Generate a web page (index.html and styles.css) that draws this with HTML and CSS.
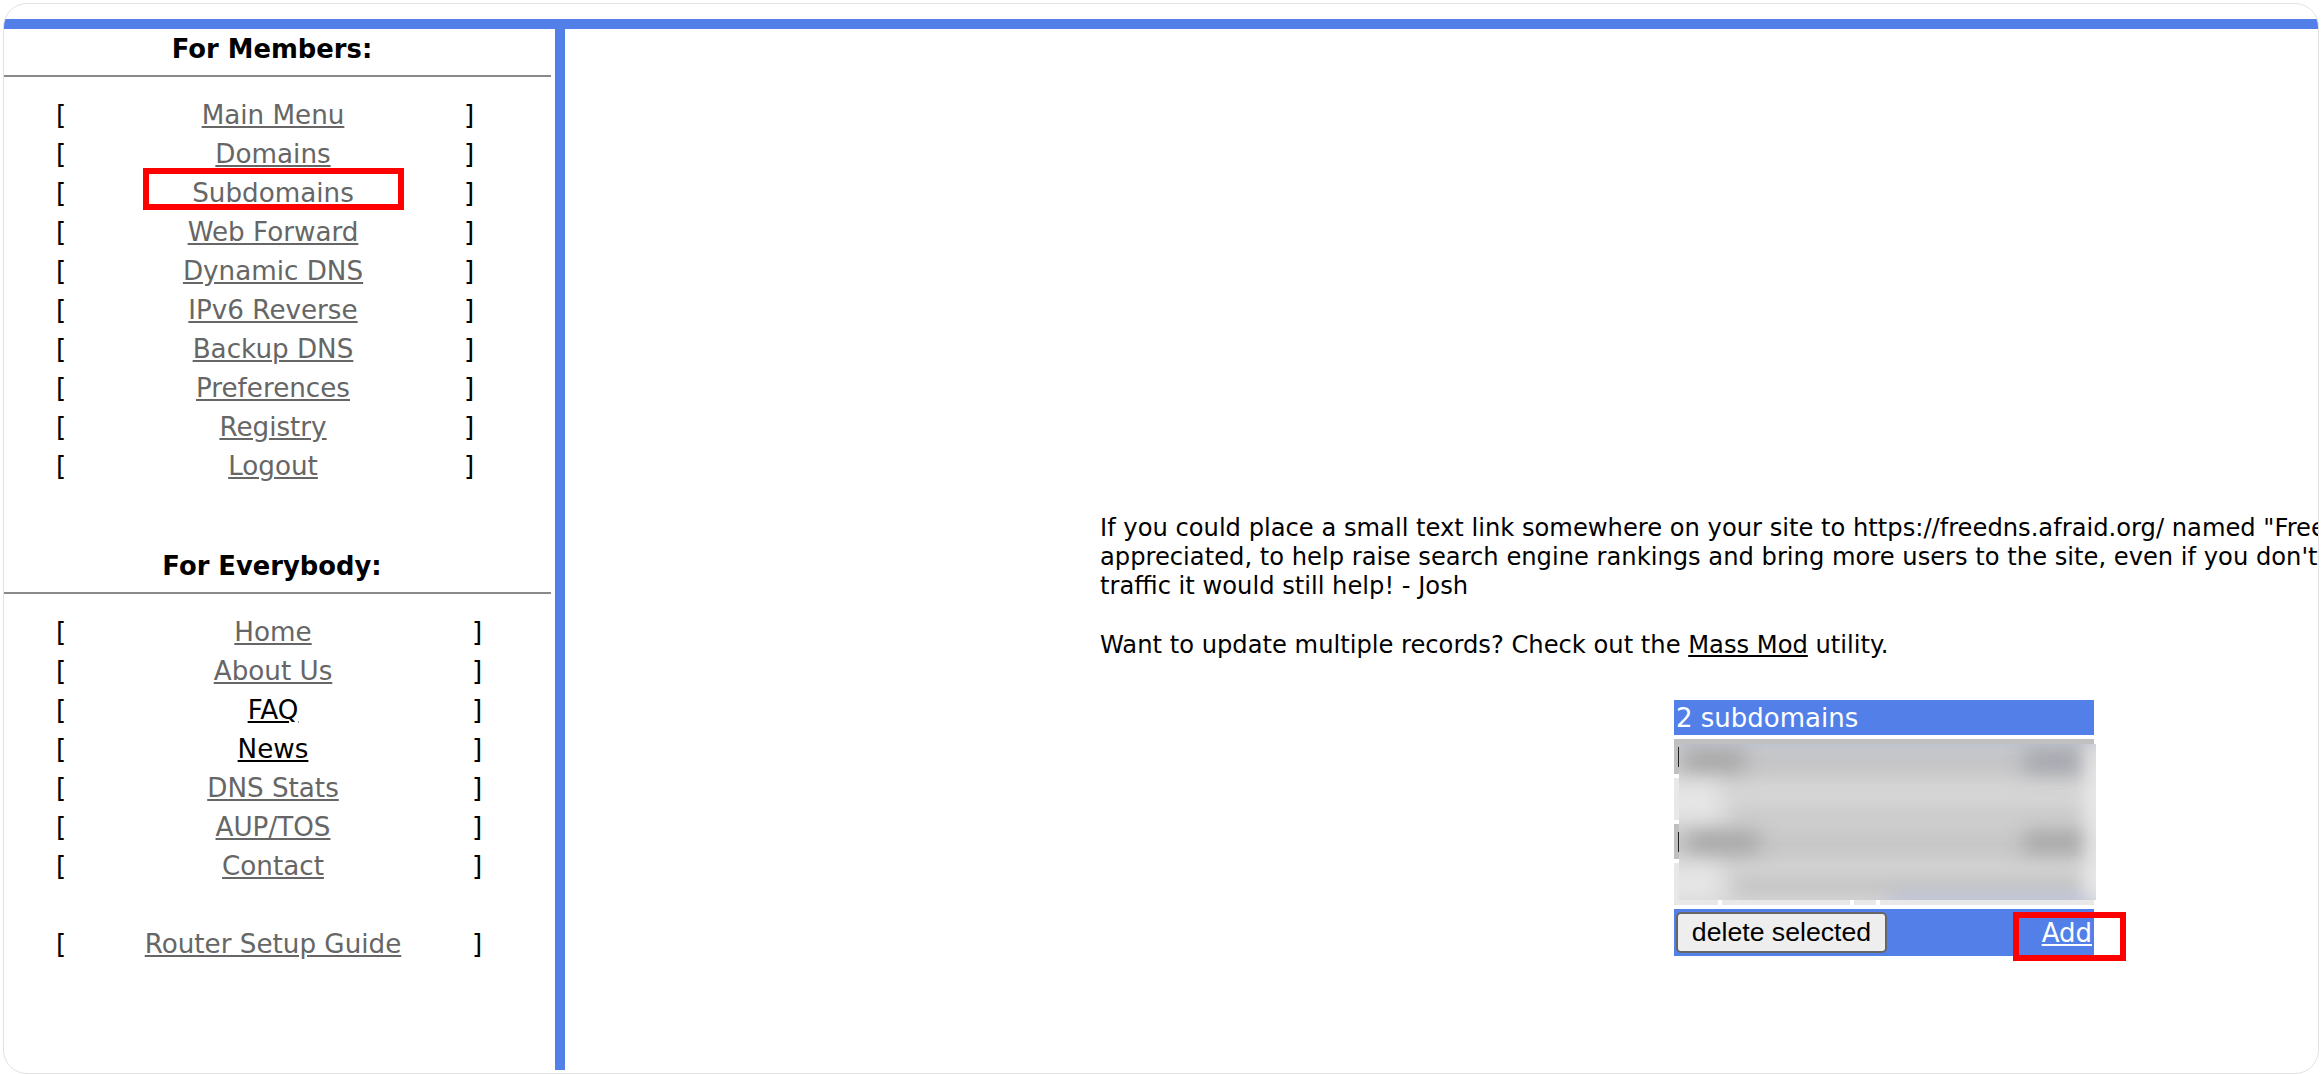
FILE: index.html
```html
<!DOCTYPE html>
<html lang="en">
<head>
    <meta charset="UTF-8">
    <title>Subdomains</title>
    <link rel="stylesheet" href="styles.css">
</head>
<body>
    <div class="frame">
        <div class="top-bar"></div>
        <div class="main">
            <div class="sidebar">
                <h3 class="side-title">For Members:</h3>
                <hr class="side-rule">
                <div class="nav">
                    <span>[</span><a href="#">Main Menu</a><span>]</span>
                    <span>[</span><a href="#">Domains</a><span>]</span>
                    <span>[</span><a href="#" class="marked">Subdomains</a><span>]</span>
                    <span>[</span><a href="#">Web Forward</a><span>]</span>
                    <span>[</span><a href="#">Dynamic DNS</a><span>]</span>
                    <span>[</span><a href="#">IPv6 Reverse</a><span>]</span>
                    <span>[</span><a href="#">Backup DNS</a><span>]</span>
                    <span>[</span><a href="#">Preferences</a><span>]</span>
                    <span>[</span><a href="#">Registry</a><span>]</span>
                    <span>[</span><a href="#">Logout</a><span>]</span>
                </div>
                <h3 class="side-title side-title-second">For Everybody:</h3>
                <hr class="side-rule">
                <div class="nav nav-wide">
                    <span>[</span><a href="#">Home</a><span>]</span>
                    <span>[</span><a href="#">About Us</a><span>]</span>
                    <span>[</span><a href="#" class="dark">FAQ</a><span>]</span>
                    <span>[</span><a href="#" class="dark">News</a><span>]</span>
                    <span>[</span><a href="#">DNS Stats</a><span>]</span>
                    <span>[</span><a href="#">AUP/TOS</a><span>]</span>
                    <span>[</span><a href="#">Contact</a><span>]</span>
                </div>
                <div class="nav nav-wide nav-guide">
                    <span>[</span><a href="#">Router Setup Guide</a><span>]</span>
                </div>
            </div>
            <div class="divider"></div>
            <div class="content">
                <p class="note">If you could place a small text link somewhere on your site to https://freedns.afraid.org/ named "Free DNS" it would be greatly<br>appreciated, to help raise search engine rankings and bring more users to the site, even if you don't get much<br>traffic it would still help! - Josh</p>
                <p class="note note-mass">Want to update multiple records? Check out the <a href="#">Mass Mod</a> utility.</p>
                <div class="records">
                    <div class="records-head">2 subdomains</div>
                    <div class="record record-dark"></div>
                    <div class="record record-light"></div>
                    <div class="record record-dark"></div>
                    <div class="record record-light record-cells"></div>
                    <div class="records-foot">
                        <button type="button">delete selected</button>
                        <a href="#">Add</a>
                    </div>
                    <div class="smudge">
                        <i class="s1"></i><i class="s2"></i><i class="s3"></i><i class="s4"></i>
                        <i class="s5"></i><i class="s6"></i><i class="s7"></i><i class="s8"></i>
                        <i class="s9"></i><i class="s10"></i><i class="s11"></i><i class="s12"></i>
                        <i class="s13"></i>
                    </div>
                    <div class="add-mark"></div>
                </div>
            </div>
        </div>
    </div>
</body>
</html>
```

FILE: styles.css
```css
html, body {
    height: 100%;
}
body {
    margin: 0;
    background: #fff;
    color: #000;
    font-family: "DejaVu Sans", sans-serif;
    font-size: 24.2px;
    line-height: 29px;
}
.frame {
    box-sizing: border-box;
    height: 1071px;
    margin: 3px 3px 0 3px;
    border: 1px solid #e2e2e2;
    border-radius: 24px;
    padding-top: 15px;
    overflow: hidden;
}
.top-bar {
    height: 10px;
    background: #527fe8;
}
.main {
    display: flex;
    height: 1041px;
}
.sidebar {
    width: 551px;
    flex: none;
    padding-top: 6px;
    font-size: 26.2px;
}
.divider {
    width: 10px;
    flex: none;
    background: #527fe8;
}
.side-title {
    margin: 0;
    width: 536px;
    font-size: 25.8px;
    line-height: 29px;
    font-weight: bold;
    text-align: center;
}
.side-title-second {
    margin-top: 66px;
}
.side-rule {
    margin: 11px 4px 0 0;
    height: 2px;
    border: 0;
    background: #8a8a8a;
}
.nav {
    display: grid;
    grid-template-columns: 60px 314px auto;
    grid-auto-rows: 39px;
    align-items: center;
    justify-items: start;
    margin: 19px 0 0 52px;
}
.nav a {
    justify-self: center;
    color: #666;
}
.nav span:nth-child(3n) {
    margin-left: 34px;
}
.nav-wide span:nth-child(3n) {
    margin-left: 42px;
}
.nav-guide {
    margin-top: 39px;
}
.nav a.dark {
    color: #000;
}
.nav a.marked {
    position: relative;
}
.nav a.marked::after {
    content: "";
    position: absolute;
    box-sizing: border-box;
    left: calc(50% - 130px);
    top: -11px;
    width: 261px;
    height: 42px;
    border: 6px solid #f00;
}
.content {
    flex: 1;
    min-width: 0;
    padding: 485px 0 0 535px;
    overflow: hidden;
    white-space: nowrap;
}
.note {
    margin: 0;
}
.note-mass {
    margin-top: 30px;
}
.note a {
    color: #000;
}
.records {
    position: relative;
    width: 420px;
    margin: 40px 0 0 574px;
    display: flex;
    flex-direction: column;
    gap: 4px;
}
.records-head {
    height: 35px;
    padding-left: 2px;
    background: #527fe8;
    color: #fff;
    font-size: 26px;
    line-height: 37px;
}
.record {
    height: 35px;
}
.record-dark {
    position: relative;
    background: #c0c0c0;
}
.record-dark::before {
    content: "";
    position: absolute;
    left: 4px;
    top: 8px;
    width: 2px;
    height: 20px;
    background: #222;
}
.record-light {
    height: 42px;
    background: #e8e8e8;
}
.record-cells {
    background: linear-gradient(to right, #e8e8e8 44px, #fff 44px, #fff 48px, #e8e8e8 48px, #e8e8e8 176px, #fff 176px, #fff 180px, #e8e8e8 180px, #e8e8e8 202px, #fff 202px, #fff 206px, #e8e8e8 206px);
}
.records-foot {
    display: flex;
    justify-content: space-between;
    align-items: center;
    height: 47px;
    padding: 0 2px 0 2px;
    background: #527fe8;
}
.records-foot button {
    box-sizing: border-box;
    width: 211px;
    height: 41px;
    padding: 0;
    border: 2px solid #666;
    border-radius: 5px;
    background: #eee;
    color: #000;
    font-family: "Liberation Sans", sans-serif;
    font-size: 26.67px;
}
.records-foot a {
    color: #fff;
    font-size: 26px;
    line-height: 31px;
    padding-top: 2px;
}
.smudge {
    position: absolute;
    left: 5px;
    top: 44px;
    width: 417px;
    height: 156px;
    background: #d8d8d8;
    overflow: hidden;
}
.smudge i {
    position: absolute;
    display: block;
    filter: blur(10px);
}
.smudge .s1 { left: -10px; top: -12px; width: 440px; height: 18px; background: #aeb8d4; }
.smudge .s2 { left: -10px; top: 2px; width: 440px; height: 32px; background: #c4c4c6; }
.smudge .s3 { left: 6px; top: 6px; width: 60px; height: 20px; background: #a4a4a4; }
.smudge .s4 { left: 345px; top: 6px; width: 60px; height: 22px; background: #a2a4ac; }
.smudge .s5 { left: 55px; top: 62px; width: 350px; height: 20px; background: #cacaca; }
.smudge .s6 { left: -10px; top: 84px; width: 440px; height: 32px; background: #c6c6c6; }
.smudge .s7 { left: 10px; top: 88px; width: 70px; height: 20px; background: #a4a4a4; }
.smudge .s8 { left: 345px; top: 88px; width: 65px; height: 20px; background: #a4a4a4; }
.smudge .s9 { left: 55px; top: 132px; width: 350px; height: 20px; background: #c2c2c2; }
.smudge .s10 { left: 210px; top: 152px; width: 210px; height: 14px; background: #b4bcd8; }
.smudge .s11 { left: -14px; top: 40px; width: 54px; height: 34px; background: #e6e6e6; }
.smudge .s12 { left: 408px; top: 0; width: 20px; height: 156px; background: #ececec; }
.smudge .s13 { left: -14px; top: 122px; width: 54px; height: 34px; background: #e6e6e6; }
.add-mark {
    position: absolute;
    left: 339px;
    top: 212px;
    width: 101px;
    height: 37px;
    border: 6px solid #f00;
}
```
